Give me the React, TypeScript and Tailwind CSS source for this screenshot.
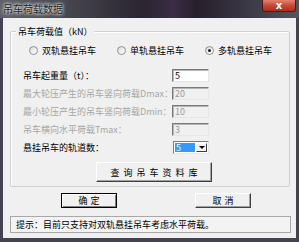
import React from "react";

function Radio({ checked, label, className }: { checked?: boolean; label: string; className?: string }) {
  return (
    <div className={"flex items-center " + (className ?? "")}>
      <div className="w-[9px] h-[9px] rounded-full border border-[#8e8f8f] bg-[linear-gradient(135deg,#dcdcdc,#ffffff)] flex items-center justify-center">
        {checked && <div className="w-[3px] h-[3px] rounded-full bg-[#1a1a1a]" />}
      </div>
      <span className="ml-[4px] whitespace-nowrap">{label}</span>
    </div>
  );
}

function Field({ label, value, disabled }: { label: string; value: string; disabled?: boolean }) {
  return (
    <div className="flex items-center h-[13px]">
      <span className={"w-[161px] pl-[12px] whitespace-nowrap " + (disabled ? "text-[#a6a6a6]" : "text-black")}>{label}</span>
      <div
        className={
          "w-[37px] h-[13px] border border-t-[#7a7a7a] border-l-[#7a7a7a] border-r-[#e6e6e6] border-b-[#e6e6e6] shadow-[inset_1px_1px_0_#b4b4b4] flex items-center pl-[2px] " +
          (disabled ? "bg-[#f0f0f0] text-[#9a9a9a]" : "bg-white text-black")
        }
      >
        {value}
      </div>
    </div>
  );
}

export default function App() {
  return (
    <div className="w-[299px] h-[242px] overflow-hidden bg-[#454350] flex flex-col font-['Noto_Sans_CJK_SC',sans-serif] text-[9px] leading-none text-black">
      {/* title bar */}
      <div className="relative h-[18px] shrink-0 bg-[linear-gradient(90deg,#5f626a_0%,#44434c_25%,#2a2430_48%,#3b2d46_58%,#271f2c_66%,#3a3744_82%,#56545e_100%)] flex items-center pl-[3px]">
        <span className="text-[10px] text-[#1f1f1f] [text-shadow:0_0_3px_#ffffff,0_0_4px_#ffffff]">吊车荷载数据</span>
        <div className="absolute right-[3px] top-0 w-[34px] h-[12px] rounded-b-[3px] border border-t-0 border-[#4a1c14] bg-[linear-gradient(180deg,#e0836f_0%,#c8493a_50%,#b02c1a_100%)] flex items-center justify-center">
          <span className="text-white text-[10px] font-bold leading-none font-['DejaVu_Sans',sans-serif]">x</span>
        </div>
      </div>

      {/* client area */}
      <div className="mx-[3px] h-[220px] shrink-0 bg-[#f0f0f0] flex flex-col">
        {/* group box */}
        <div className="relative ml-[7px] mt-[13px] w-[280px] h-[156px] border border-[#cdd1d4] rounded-[2px] shadow-[inset_1px_1px_0_#ffffff] flex flex-col">
          <span className="absolute left-[5px] top-[-5px] px-[2px] bg-[#f0f0f0] whitespace-nowrap">吊车荷载值（kN）</span>

          <div className="flex items-center h-[10px] mt-[13px] pl-[18px]">
            <Radio label="双轨悬挂吊车" />
            <Radio label="单轨悬挂吊车" className="ml-[21px]" />
            <Radio label="多轨悬挂吊车" checked className="ml-[21px]" />
          </div>

          <div className="flex flex-col gap-[5px] mt-[14px]">
            <Field label="吊车起重量（t）：" value="5" />
            <Field label="最大轮压产生的吊车竖向荷载Dmax：" value="20" disabled />
            <Field label="最小轮压产生的吊车竖向荷载Dmin：" value="10" disabled />
            <Field label="吊车横向水平荷载Tmax：" value="3" disabled />
            <div className="flex items-center h-[13px]">
              <span className="w-[162px] pl-[12px] whitespace-nowrap">悬挂吊车的轨道数：</span>
              <div className="w-[36px] h-[13px] border border-t-[#7a7a7a] border-l-[#7a7a7a] border-r-[#e6e6e6] border-b-[#e6e6e6] bg-white flex items-stretch p-[1px]">
                <div className="flex-1 bg-[#3399ff] text-white flex items-center pl-[1px]">5</div>
                <div className="w-[11px] ml-[1px] bg-[#f0f0f0] border border-t-white border-l-white border-r-[#404040] border-b-[#404040] flex items-center justify-center">
                  <div className="w-0 h-0 border-l-[3px] border-r-[3px] border-t-[3px] border-l-transparent border-r-transparent border-t-black" />
                </div>
              </div>
            </div>
          </div>

          <div className="ml-[85px] mt-[8px] w-[116px] h-[20px] border border-t-white border-l-white border-r-[#404040] border-b-[#404040] shadow-[inset_-1px_-1px_0_#a0a0a0] flex items-center justify-center tracking-[4px] pl-[4px]">
            查询吊车资料库
          </div>
        </div>

        {/* buttons */}
        <div className="flex mt-[6px] ml-[58px]">
          <div className="w-[56px] h-[15px] border border-black shadow-[inset_1px_1px_0_#ffffff,inset_-1px_-1px_0_#808080] flex items-center justify-center tracking-[3px] pl-[3px]">
            确定
          </div>
          <div className="ml-[78px] w-[56px] h-[15px] border border-t-white border-l-white border-r-[#404040] border-b-[#404040] shadow-[inset_-1px_-1px_0_#a0a0a0] flex items-center justify-center tracking-[3px] pl-[3px]">
            取消
          </div>
        </div>

        {/* hint */}
        <div className="ml-[7px] mt-[8px] w-[281px] h-[17px] border border-[#a8a8a8] bg-[#f3f3f3] flex items-center pl-[5px] whitespace-nowrap">
          提示：目前只支持对双轨悬挂吊车考虑水平荷载。
        </div>
      </div>
    </div>
  );
}
